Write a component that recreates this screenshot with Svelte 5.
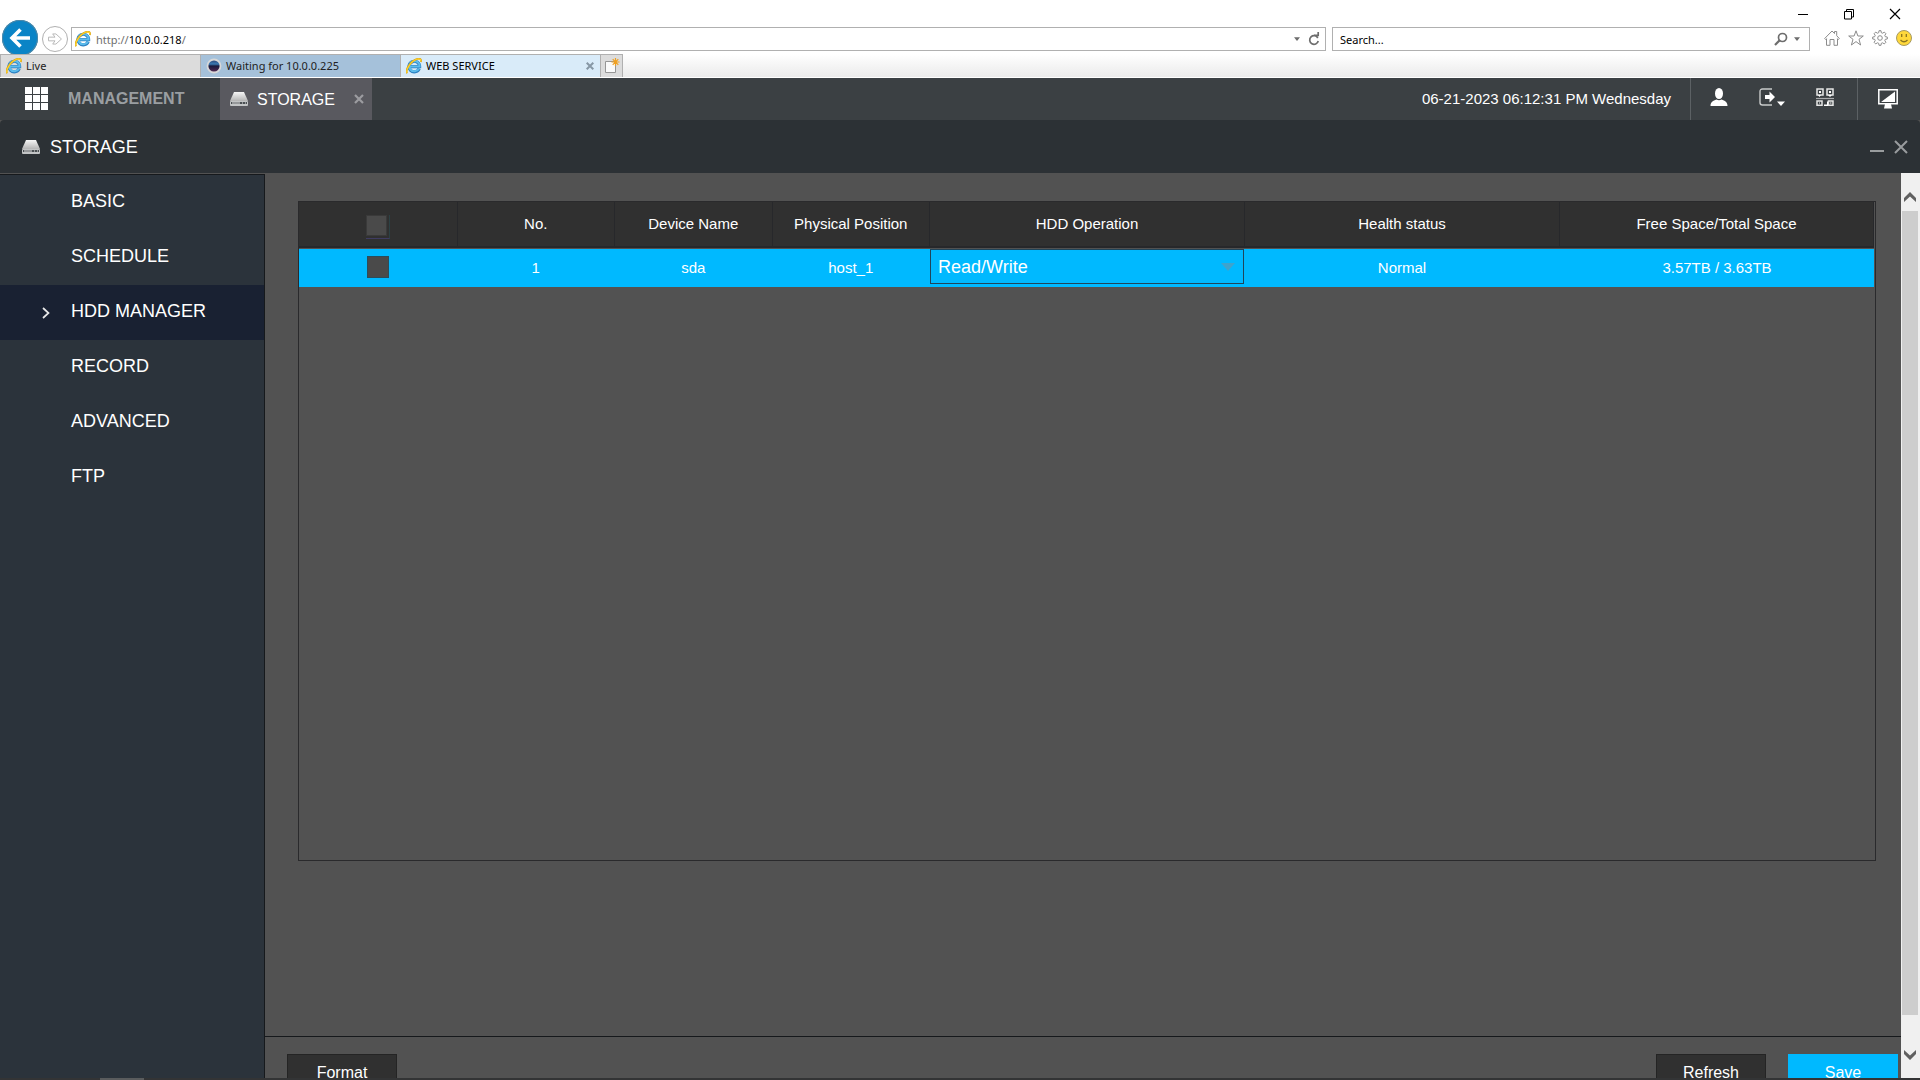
<script>
  const columns = [
    { label: 'No.', width: 10 },
    { label: 'Device Name', width: 10 },
    { label: 'Physical Position', width: 10 },
    { label: 'HDD Operation', width: 20 },
    { label: 'Health status', width: 20 },
    { label: 'Free Space/Total Space', width: 20 }
  ];
  const menu = ['BASIC', 'SCHEDULE', 'HDD MANAGER', 'RECORD', 'ADVANCED', 'FTP'];
  let active = $state('HDD MANAGER');
  let operation = $state('Read/Write');
  let host = $state('10.0.0.218');
</script>

{#snippet browserLogo()}
  <svg class="i16" viewBox="0 0 16 16" aria-hidden="true">
    <path d="M13.2 10.6A5.3 5.3 0 1 1 13.6 8.6H4.2" fill="none" stroke="#2a7fc0" stroke-width="3.2" />
    <path d="M13 10.6A5.2 5.2 0 1 1 13.6 8.5H4.2" fill="none" stroke="#5cbcec" stroke-width="2" />
    <path d="M1.2 15.2C-1 12.5 4 3.6 10.6 1.2C14 0 15.6 1.2 14.8 4" fill="none" stroke="#d99f0c" stroke-width="1.8" />
    <path d="M1.2 15C-.6 12.4 4.2 3.8 10.6 1.3C13.8 .2 15.3 1.3 14.7 3.6" fill="none" stroke="#ffd42e" stroke-width="1.1" />
  </svg>
{/snippet}

{#snippet drive()}
  <svg class="drive" viewBox="0 0 18 14" aria-hidden="true">
    <defs>
      <linearGradient id="driveTop" x1="0" y1="0" x2="0" y2="1">
        <stop offset="0" stop-color="#f6f6f6" /><stop offset="1" stop-color="#b4b4b4" />
      </linearGradient>
    </defs>
    <path d="M4 0H14L18 9H0Z" fill="url(#driveTop)" />
    <rect y="9" width="18" height="5" rx="1" fill="#c2c4c5" />
    <rect x="1" y="10" width="16" height="2" fill="#4a4f52" />
    <path d="M2 11H10M12 11H13M15 11H16" stroke="#e2e2e2" />
  </svg>
{/snippet}

{#snippet caret()}
  <svg class="caret" viewBox="0 0 8 5" aria-hidden="true"><path d="M0 0H8L4 5Z" fill="#6d6d6d" /></svg>
{/snippet}

<div class="app">
  <div class="browser">
    <div class="titlebar">
      <button aria-label="Minimize window"><svg viewBox="0 0 12 12"><path d="M1 6.5H11" stroke="#000" /></svg></button>
      <button aria-label="Restore window"><svg viewBox="0 0 12 12"><path d="M1.5 3.5H8.5V11H1.5ZM3.5 3.5V1.5H10.5V9H8.5" fill="none" stroke="#000" /></svg></button>
      <button aria-label="Close window"><svg viewBox="0 0 12 12"><path d="M1 1L11 11M11 1L1 11" stroke="#000" stroke-width="1.2" /></svg></button>
    </div>

    <div class="toolbar">
      <button class="back" aria-label="Back">
        <svg viewBox="0 0 36 36"><path d="M28 18H11M18.500 9.500L10 18L18.500 26.500" fill="none" stroke="#fff" stroke-width="3.600" /></svg>
      </button>
      <button class="forward" aria-label="Forward">
        <svg viewBox="0 0 26 26"><path d="M6 11H13L10.500 7.500H14L20 13L14 18.500H10.500L13 15H6Z" fill="none" stroke="#b4b4b4" /></svg>
      </button>
      <div class="field address">
        {@render browserLogo()}
        <label class="url"><span>http://</span><input aria-label="Address" bind:value={host} /><span>/</span></label>
        <button aria-label="Show address history">{@render caret()}</button>
        <button aria-label="Reload">
          <svg class="i12" viewBox="0 0 12 14"><path d="M9.800 6A4.300 4.300 0 1 0 10.200 9M6 3.400H10.200V0" fill="none" stroke="#6d6d6d" stroke-width="1.700" /></svg>
        </button>
      </div>
      <div class="field search">
        <input aria-label="Search" placeholder="Search..." />
        <button aria-label="Search the web">
          <svg class="i14" viewBox="0 0 14 14"><circle cx="8.500" cy="5.500" r="4" fill="none" stroke="#6d6d6d" stroke-width="1.700" /><path d="M5.600 8.400L1 13" stroke="#6d6d6d" stroke-width="2.200" /></svg>
        </button>
        <button aria-label="Choose search provider">{@render caret()}</button>
      </div>
      <div class="tools">
        <button aria-label="Home">
          <svg class="i16" viewBox="0 0 16 16"><path d="M.7 8.500L8 1L10.500 3.500V1.500H12.700V5.700L15.300 8.500L14.300 9.500L13.500 8.700V15.300H10V9.500H6V15.300H2.500V8.700L1.700 9.500Z" fill="none" stroke="#8c8c8c" /></svg>
        </button>
        <button aria-label="Favorites">
          <svg class="i16" viewBox="0 0 16 16"><path d="M8 .8L9.900 6H15.300L11 9.300L12.600 15L8 11.600L3.400 15L5 9.300L.7 6H6.100Z" fill="none" stroke="#8c8c8c" /></svg>
        </button>
        <button aria-label="Tools">
          <svg class="i16" viewBox="0 0 16 16"><path d="M6.700 2.700L7 .7H9L9.300 2.700L10.600 3.200L12.300 2.100L13.900 3.700L12.800 5.400L13.300 6.700L15.300 7V9L13.300 9.300L12.800 10.600L13.900 12.300L12.300 13.900L10.600 12.800L9.300 13.300L9 15.300H7L6.700 13.300L5.400 12.800L3.700 13.900L2.100 12.300L3.200 10.600L2.700 9.300L.7 9V7L2.700 6.700L3.200 5.400L2.100 3.700L3.700 2.100L5.400 3.200Z" fill="none" stroke="#8c8c8c" /><circle cx="8" cy="8" r="2.300" fill="none" stroke="#8c8c8c" /></svg>
        </button>
        <button aria-label="Send feedback">
          <svg class="i16" viewBox="0 0 16 16"><circle cx="8" cy="8" r="7.500" fill="#ffd83b" stroke="#a79a62" /><path d="M5.700 4V7M10.300 4V7M4.500 10Q8 13.500 11.500 10" fill="none" stroke="#8a7420" stroke-width="1.300" /></svg>
        </button>
      </div>
    </div>

    <div class="tabs">
      <button class="tab live">{@render browserLogo()}Live</button>
      <button class="tab waiting">
        <svg class="i16" viewBox="0 0 16 16" aria-hidden="true">
          <defs><linearGradient id="orb" x1="0" y1="0" x2="0" y2="1"><stop offset="0" stop-color="#2b3d6c" /><stop offset=".35" stop-color="#3a7bb4" /><stop offset=".5" stop-color="#1a1a3c" /><stop offset="1" stop-color="#5b2c55" /></linearGradient></defs>
          <circle cx="8" cy="8" r="6.500" fill="url(#orb)" stroke="#d8d8d8" stroke-width="1.800" />
        </svg>
        Waiting for 10.0.0.225
      </button>
      <div class="tab current">
        {@render browserLogo()}
        <span>WEB SERVICE</span>
        <button aria-label="Close tab"><svg class="i8" viewBox="0 0 8 8"><path d="M.7 .7L7.300 7.300M7.300 .7L.7 7.300" stroke="#8797a5" stroke-width="2" /></svg></button>
      </div>
      <button class="new" aria-label="New tab">
        <svg class="i16" viewBox="0 0 16 16"><path d="M1.500 3.500H11.500V14.500H1.500Z" fill="#fafafa" stroke="#969696" /><path d="M11.500 0V8M7.500 4H15.500M8.700 1.200L14.300 6.800M14.300 1.200L8.700 6.800" stroke="#f0a020" stroke-width="1.200" /></svg>
      </button>
    </div>
  </div>

  <header class="nav">
    <button class="management">
      <svg class="grid" viewBox="0 0 23 23" aria-hidden="true">
        {#each [0, 8, 16] as y}{#each [0, 8, 16] as x}<rect {x} {y} width="7" height="7" fill="#fff" />{/each}{/each}
      </svg>
      <span>MANAGEMENT</span>
    </button>
    <div class="apptab">
      {@render drive()}
      <span>STORAGE</span>
      <button aria-label="Close storage"><svg class="i10" viewBox="0 0 10 10"><path d="M1 1L9 9M9 1L1 9" stroke="#9c9ca0" stroke-width="2.200" /></svg></button>
    </div>
    <time datetime="2023-06-21T18:12:31">06-21-2023 06:12:31 PM Wednesday</time>
    <div class="actions">
      <button aria-label="User"><svg class="i18" viewBox="0 0 18 18"><ellipse cx="9" cy="5.500" rx="4" ry="5.500" fill="#fff" /><path d="M.5 18C.5 14 3 12.500 6.500 11.500Q9 13 11.500 11.500C15 12.500 17.500 14 17.500 18Z" fill="#fff" /></svg></button>
      <button aria-label="Log out"><svg class="exit" viewBox="0 0 26 18"><path d="M13 1H3.500Q1 1 1 3.500V14.500Q1 17 3.500 17H13" fill="none" stroke="#c8caca" stroke-width="1.400" /><path d="M6 7H10.500V3.500L16 9L10.500 14.500V11H6ZM18 13.500H26L22 18Z" fill="#fff" /></svg></button>
      <button aria-label="QR code"><svg class="i18" viewBox="0 0 18 18"><path d="M1 1H7V7H1ZM11 1H17V7H11ZM1 13H6V17.300H1ZM12.500 13H17V17.300H12.500Z" fill="none" stroke="#e6e6e6" stroke-width="1.500" /><path d="M3 3H5V5H3ZM13 3H15V5H13ZM3 14.500H4V15.500H3ZM14 14.500H15.500V15.500H14ZM2 7H5L3.500 9ZM12 7H16L14 9ZM8 16.500H11V13.500H12V18H8Z" fill="#fff" /><path d="M0 10.500H18" stroke="#a9abac" stroke-width="1.200" /></svg></button>
    </div>
    <button class="preview" aria-label="Live preview"><svg class="i20" viewBox="0 0 20 20"><path d="M.8 .8H19.200V14.800H.8Z" fill="none" stroke="#fff" stroke-width="1.500" /><path d="M3 13H17V2.500ZM7 15H13L14 19.500H6Z" fill="#fff" /></svg></button>
  </header>

  <div class="panelhead">
    {@render drive()}
    <h1>STORAGE</h1>
    <button aria-label="Minimize panel"><svg class="i14" viewBox="0 0 14 14"><path d="M0 11H14" stroke="#999c9e" stroke-width="2" /></svg></button>
    <button aria-label="Close panel"><svg class="i14" viewBox="0 0 14 14"><path d="M1 1L13 13M13 1L1 13" stroke="#999c9e" stroke-width="2" /></svg></button>
  </div>

  <div class="body">
    <nav class="side">
      {#each menu as item}
        <button class:active={item === active} onclick={() => (active = item)}>
          {#if item === active}
            <svg class="chevron" viewBox="0 0 8 12" aria-hidden="true"><path d="M1 1L6.500 6L1 11" fill="none" stroke="#e8e8e8" stroke-width="1.700" /></svg>
          {/if}
          {item}
        </button>
      {/each}
    </nav>

    <main>
      <div class="listing">
        <table>
          <colgroup>
            <col class="w10" />
            {#each columns as c}<col class={'w' + c.width} />{/each}
          </colgroup>
          <thead>
            <tr>
              <th><label class="all"><input type="checkbox" aria-label="Select all disks" /></label></th>
              {#each columns as c}<th>{c.label}</th>{/each}
            </tr>
          </thead>
          <tbody>
            <tr>
              <td><input type="checkbox" aria-label="Select disk 1" /></td>
              <td>1</td>
              <td>sda</td>
              <td>host_1</td>
              <td class="op">
                <div class="pick">
                  <select aria-label="HDD operation" bind:value={operation}>
                    <option>Read/Write</option>
                    <option>Read-only</option>
                  </select>
                  <svg viewBox="0 0 14 8" aria-hidden="true"><path d="M0 0H14L7 8Z" fill="#3fa3cc" /></svg>
                </div>
              </td>
              <td>Normal</td>
              <td>3.57TB / 3.63TB</td>
            </tr>
          </tbody>
        </table>
      </div>
      <footer>
        <button>Format</button>
        <button class="refresh">Refresh</button>
        <button class="save">Save</button>
      </footer>
    </main>

    <div class="scroll" aria-hidden="true">
      <svg viewBox="0 0 12 10"><path d="M0 10V6L6 0L12 6V10L6 4.500Z" fill="#606060" /></svg>
      <div class="thumb"></div>
      <svg viewBox="0 0 12 10"><path d="M0 0V4L6 10L12 4V0L6 5.500Z" fill="#606060" /></svg>
    </div>
  </div>
  <div class="edge"><i></i></div>
</div>

<style>
  :global(body) { overflow: hidden; }
  * { box-sizing: border-box; }
  button { padding: 0; border: 0; background: none; color: inherit; font: inherit; cursor: pointer; }
  svg { display: block; flex: none; }
  .i8 { width: 8px; height: 8px; }
  .i10 { width: 10px; height: 10px; }
  .i12 { width: 12px; height: 14px; }
  .i14 { width: 14px; height: 14px; }
  .i16 { width: 16px; height: 16px; }
  .i18 { width: 18px; height: 18px; }
  .i20 { width: 20px; height: 20px; }
  .drive { width: 18px; height: 14px; }
  .caret { width: 6px; height: 4px; }

  .app { display: flex; flex-direction: column; height: 100vh; overflow: hidden; background: #525252; color: #fff; font-family: "Liberation Sans", Arial, sans-serif; }

  .browser { flex: none; background: #fff; color: #222; font: 12px/16px "Noto Sans", "Open Sans", sans-serif; }
  .titlebar { display: flex; justify-content: flex-end; align-items: center; gap: 34px; height: 27px; padding-right: 19px; }
  .titlebar svg { width: 12px; height: 12px; }
  .toolbar { display: flex; align-items: flex-start; height: 27px; padding: 0 8px 0 2px; }
  .back { flex: none; width: 36px; height: 36px; margin-top: -7px; border-radius: 50%; background: #0a84c6; box-shadow: inset 0 0 0 1px #4f87a5; }
  .forward { flex: none; width: 26px; height: 26px; margin: -1px 3px 0 4px; border: 1px solid #b0b0b0; border-radius: 50%; }
  .forward svg { width: 24px; height: 24px; }
  .field { display: flex; align-items: center; height: 24px; border: 1px solid #b0b0b0; background: #fff; font-size: 11px; }
  .field input { padding: 0; border: 0; outline: 0; background: none; color: #000; font: inherit; }
  .field input::placeholder { color: #000; opacity: 1; }
  .address { flex: 1; gap: 8px; padding: 0 5px 0 3px; }
  .address .url { flex: 1; display: flex; margin-left: -3px; padding-top: 1px; color: #6e6e6e; }
  .address .url input { width: 53px; }
  .search { width: 478px; margin-left: 6px; padding: 0 9px 0 7px; gap: 6px; }
  .search input { flex: 1; padding-top: 1px; }
  .tools { display: flex; gap: 8px; padding: 3px 0 0 14px; }

  .tabs { position: relative; display: flex; height: 24px; border-bottom: 1px solid #fff; background: linear-gradient(#fff, #ebebeb); }
  .tab { display: flex; align-items: center; gap: 4px; width: 200px; padding: 0 6px 0 5px; border: solid #b0b0b0; border-width: 1px 0 0 1px; font-size: 11px; }
  .live { background: #dcdcdc; }
  .waiting { background: #a5c1da; }
  .current { background: #d9ebf9; color: #000; }
  .current span { flex: 1; }
  .new { display: grid; place-items: center; width: 23px; border: 1px solid #b0b0b0; border-bottom: 0; background: #dcdcdc; }

  .nav { flex: none; display: flex; align-items: stretch; height: 42px; background: #3b4043; font-size: 16px; }
  .management { display: flex; align-items: center; gap: 20px; width: 220px; padding: 0 0 2px 25px; color: #9a9ea1; font-weight: bold; }
  .grid { width: 23px; height: 23px; }
  .nav span { padding-top: 2px; }
  .apptab { display: flex; align-items: center; width: 152px; padding: 0 8px 0 10px; gap: 9px; background: #59595f; }
  .apptab span { flex: 1; }
  time { margin-left: auto; padding-right: 19px; font-size: 15px; line-height: 42px; }
  .actions { display: flex; align-items: center; gap: 31px; padding: 0 23px 4px 19px; border-left: 1px solid #5c6164; }
  .exit { width: 26px; height: 18px; }
  .preview { display: flex; justify-content: center; align-items: center; width: 63px; padding: 0 3px 0 0; border-left: 1px solid #5c6164; }

  .panelhead { flex: none; display: flex; align-items: center; gap: 10px; height: 53px; padding: 0 12px 0 22px; border-radius: 4px 4px 0 0; background: #2c3135; }
  h1 { flex: 1; margin: 0; font-size: 18px; font-weight: normal; line-height: 20px; }

  .body { flex: 1; display: flex; min-height: 0; }
  .side { flex: none; width: 265px; margin-top: 1px; border: solid #16191c; border-width: 1px 1px 0 0; background: #2b333b; }
  .side button { position: relative; display: block; width: 100%; height: 55px; padding: 0 0 2px 71px; text-align: left; font-size: 18px; }
  .side .active { background: #192132; }
  .chevron { position: absolute; left: 42px; top: 22px; width: 8px; height: 12px; }

  main { flex: 1; display: flex; flex-direction: column; min-width: 0; }
  .listing { height: 660px; margin: 28px 25px 0 33px; padding-right: 1px; border: 1px solid #2a2a2c; }
  table { width: 100%; border-spacing: 0; table-layout: fixed; font-size: 15px; }
  .w10 { width: 10%; }
  .w20 { width: 20%; }
  th { height: 46px; padding: 0 0 2px; border: solid #27282b; border-width: 0 0 2px 1px; background: #303030; font-weight: normal; }
  th:first-child { border-left: 0; }
  th:last-child { border-right-width: 1px; }
  td { height: 39px; padding: 0 0 2px 1px; border-top: 1px solid #525252; background: #00b9ff; text-align: center; }
  input[type='checkbox'] { display: block; appearance: none; width: 22px; height: 22px; margin: 0 auto; border: 1px solid #2c4c5a; background: #4a4a4a; }
  .all { display: block; width: 24px; height: 24px; margin: 8px auto 0; border: solid #3f3c62; border-width: 0 1px 1px 0; border-right-color: #2c4144; }
  .all input { width: 21px; height: 21px; margin: 0; border-color: #3a3a3a; }
  td.op { vertical-align: top; }
  .pick { position: relative; height: 35px; }
  select { display: block; appearance: none; width: 100%; height: 35px; padding: 0 7px; border: 1px solid #20455a; border-radius: 0; outline: 0; background: #00b9ff; color: #fff; font: 18px "Liberation Sans", Arial, sans-serif; }
  .pick svg { position: absolute; right: 9px; top: 14px; width: 14px; height: 8px; pointer-events: none; }

  footer { display: flex; align-items: flex-start; gap: 22px; height: 42px; margin-top: auto; padding: 17px 3px 0 22px; overflow: hidden; border-top: 1px solid #16191c; }
  footer button { flex: none; width: 110px; height: 38px; border: 1px solid #242424; background: #303030; font-size: 16px; }
  footer .refresh { margin-left: auto; }
  footer .save { border-color: #00b9ff; background: #00b9ff; }

  .scroll { display: flex; flex-direction: column; align-items: center; width: 19px; padding: 19px 1px 18px 0; background: #f0f0f0; }
  .scroll svg { width: 12px; height: 10px; }
  .thumb { flex: 1; width: 16px; margin: 9px 0 35px; background: #cdcdcd; }
  .edge { flex: none; height: 2px; padding-left: 100px; background: #333435; }
  .edge i { display: block; width: 44px; height: 2px; background: #5a5c5d; }
</style>
